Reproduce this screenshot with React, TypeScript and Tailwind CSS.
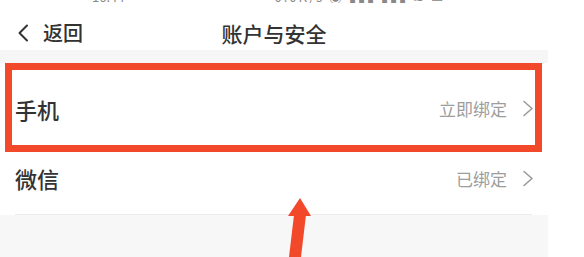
import React from 'react';

const cjk = { fontFamily: '"Noto Sans CJK SC", "Noto Sans", sans-serif' };

function ChevronRight() {
  return (
    <svg width="12" height="17" viewBox="0 0 12 17" fill="none">
      <path d="M2 1.5 L10 8.5 L2 15.5" stroke="#9a9a9a" strokeWidth="1.6" strokeLinecap="round" strokeLinejoin="round" />
    </svg>
  );
}

function Row({ label, value }: { label: string; value: string }) {
  return (
    <div className="flex items-center justify-between pl-[15px] pr-[14px] h-full">
      <span className="text-[22px] leading-none text-[#333] font-medium">{label}</span>
      <div className="flex items-center gap-[15px]">
        <span className="text-[17px] leading-none text-[#9d9d9d]">{value}</span>
        <ChevronRight />
      </div>
    </div>
  );
}

export default function App() {
  return (
    <div className="relative w-[584px] h-[257px] overflow-hidden bg-white flex" style={cjk}>
      <div className="w-[548px] flex flex-col">
        {/* status bar, mostly cropped off */}
        <div className="h-[3px] overflow-hidden flex text-[13px] leading-none text-[#888]">
          <span className="-mt-[10px] ml-[92px]">16:44</span>
          <span className="-mt-[10px] ml-[150px] tracking-[2px]">0.0K/s ◉ ▮▮▮ ▮▮▮ ≋ ▭</span>
        </div>

        {/* header */}
        <div className="h-[47px] pt-[13px] grid grid-cols-[1fr_auto_1fr] items-center">
          <div className="flex items-center pl-[17px] gap-[14px]">
            <svg width="12" height="18" viewBox="0 0 12 18" fill="none">
              <path d="M10 1.5 L2.5 9 L10 16.5" stroke="#333" strokeWidth="2" strokeLinecap="round" strokeLinejoin="round" />
            </svg>
            <span className="text-[20px] leading-none text-[#333] font-medium">返回</span>
          </div>
          <span className="text-[21px] leading-none text-[#333] font-medium">账户与安全</span>
          <div />
        </div>

        <div className="h-[13px] bg-[#f6f6f6]" />

        {/* phone row with highlight box */}
        <div className="relative h-[89px] bg-white">
          <div className="h-full pt-[2px]">
            <Row label="手机" value="立即绑定" />
          </div>
          <div className="absolute left-[5px] top-0 w-[537px] h-[89px] border-[7px] border-[#f2492b]" />
        </div>

        {/* wechat row */}
        <div className="h-[62px] bg-white pb-[10px]">
          <Row label="微信" value="已绑定" />
        </div>
        <div className="ml-[15px] mr-[16px] h-px bg-[#ececec]" />

        <div className="flex-1 bg-[#f7f7f7]" />
      </div>
      <div className="flex-1 bg-white" />

      {/* annotation arrow */}
      <svg className="absolute left-0 top-0" width="584" height="257" viewBox="0 0 584 257">
        <polygon points="300,198 311,216 288,216" fill="#f2492b" />
        <polygon points="294,215 306,215 301,257 289,257" fill="#f2492b" />
      </svg>
    </div>
  );
}
